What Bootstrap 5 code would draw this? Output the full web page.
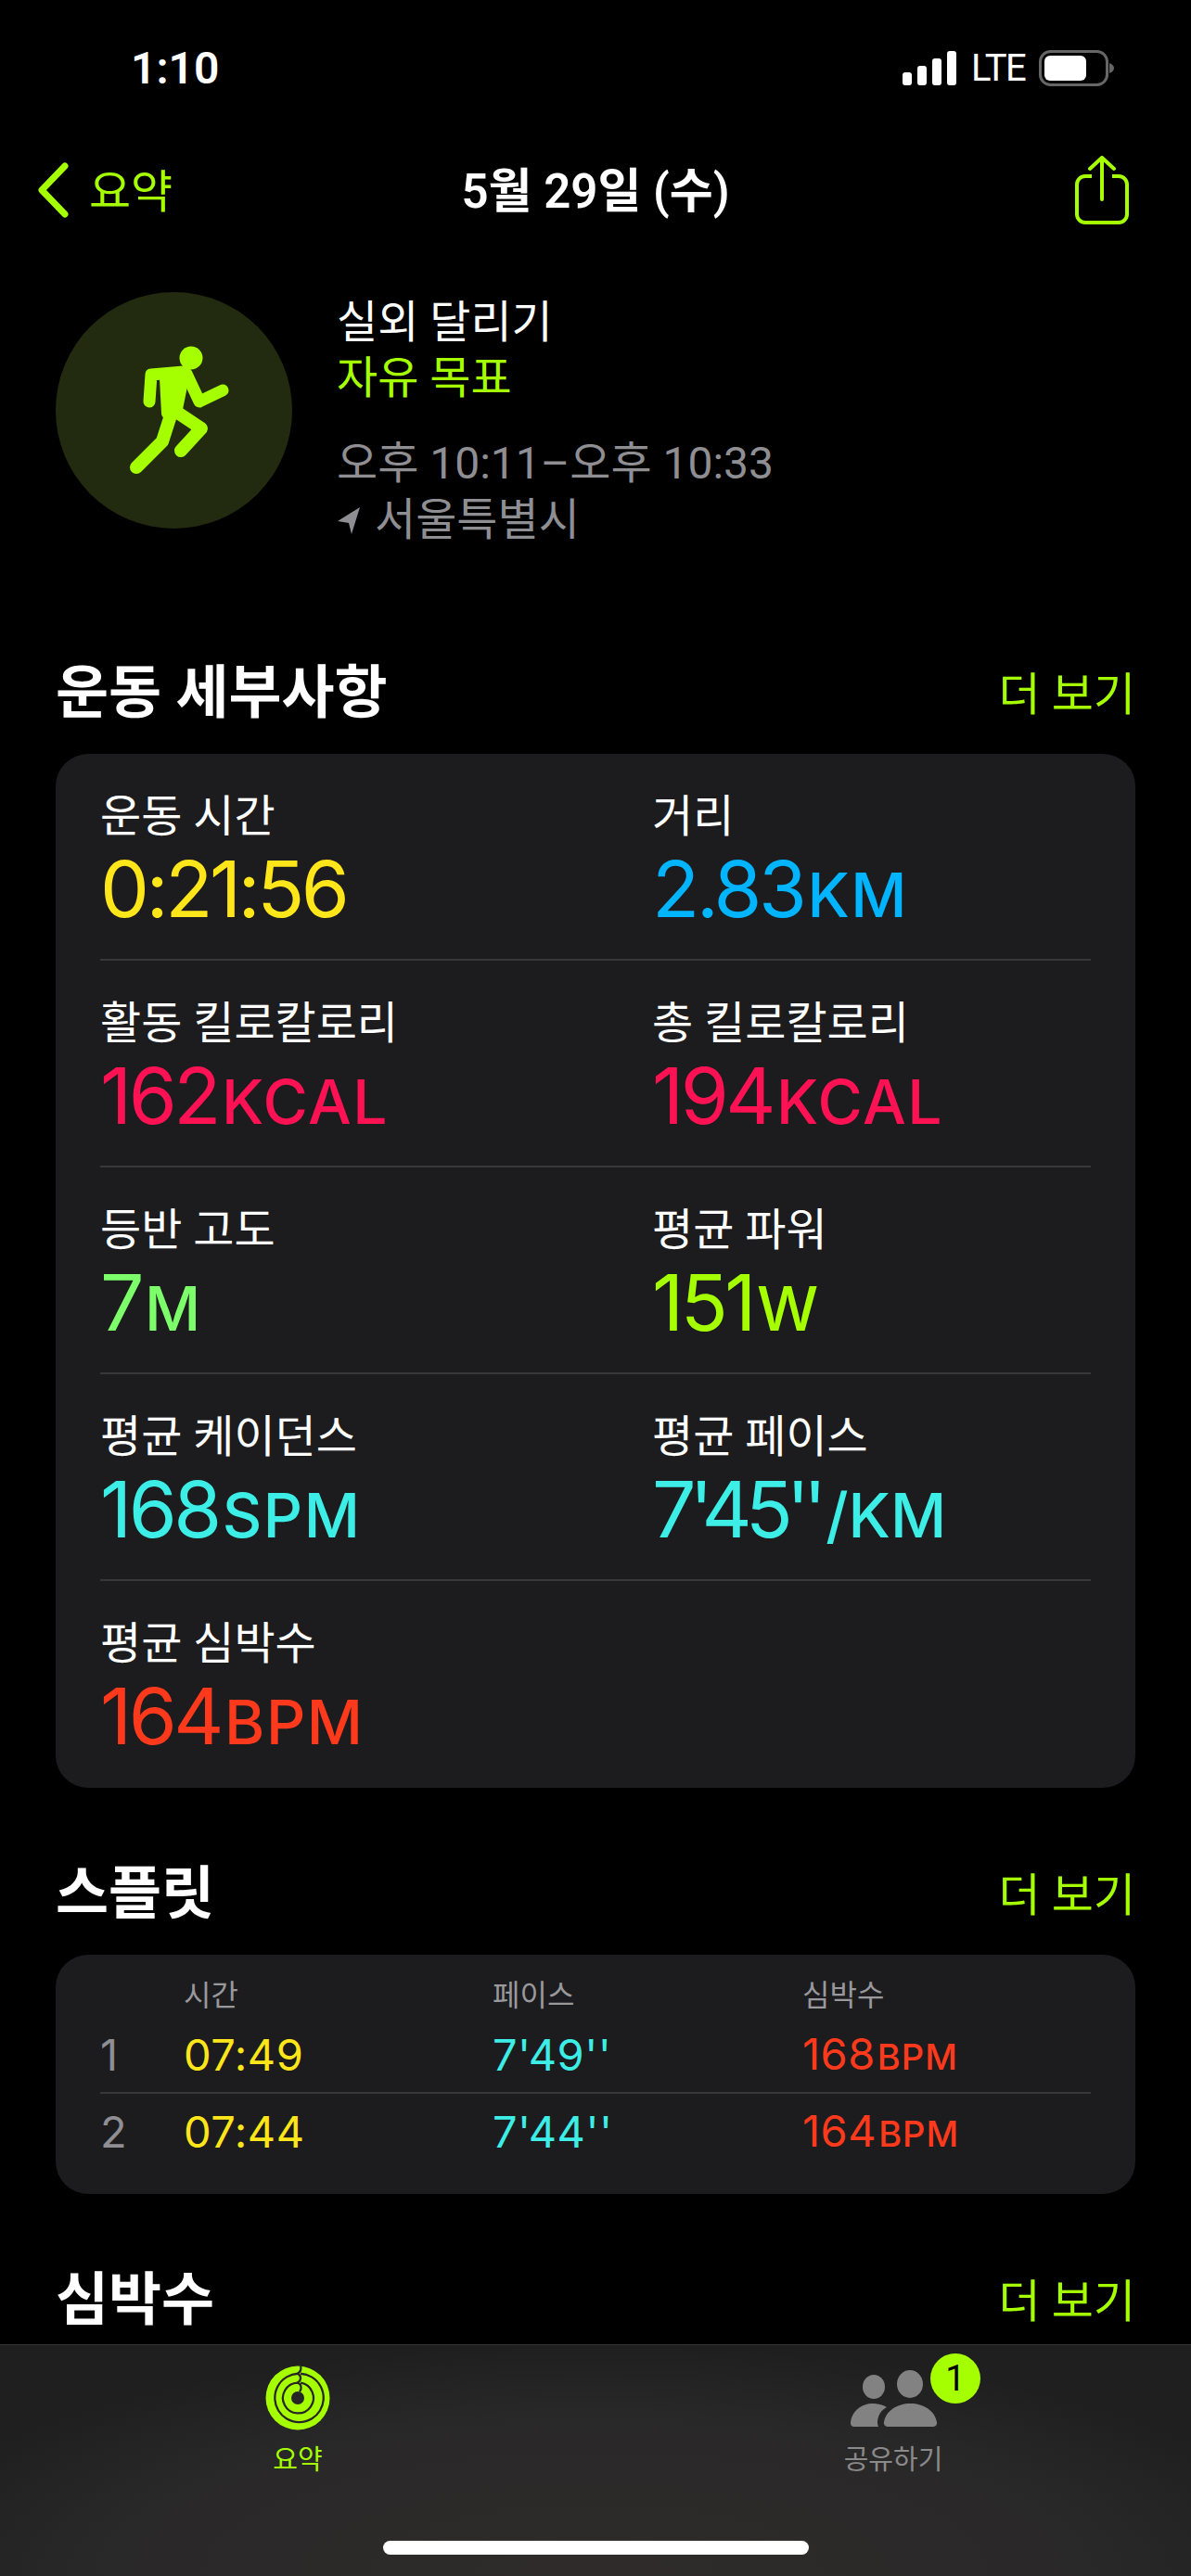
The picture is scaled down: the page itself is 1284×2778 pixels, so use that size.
<!DOCTYPE html>
<html lang="ko">
<head>
  <meta charset="UTF-8" />
  <meta name="viewport" content="width=device-width, initial-scale=1.0"/>
  <title>운동 세부사항</title>
  <link href="https://cdn.jsdelivr.net/npm/bootstrap@5.3.3/dist/css/bootstrap.min.css" rel="stylesheet" />
  <style>
    body {
      background-color: #000;
      color: #fff;
      font-family: Roboto, "Noto Sans CJK KR", sans-serif;
      height: 2778px;
      overflow: hidden;
    }
    .screen { height: 2778px; }
    .status-bar { height: 150px; padding: 46px 83px 0 141px; }
    .status-time { font-size: 48px; font-weight: 600; line-height: 56px; }
    .status-icons { gap: 16px; height: 54px; }
    .lte-text { font-size: 40px; line-height: 40px; letter-spacing: -1.500px; width: 57px; padding-top: 2px; }
    .nav-bar { height: 110px; padding: 0 67px 0 38px; }
    .nav-back { font-size: 49px; color: #a6ff00; gap: 22px; line-height: 60px; }
    .nav-back span { padding-top: 5px; }
    .nav-title { font-size: 51px; font-weight: 600; left: 0; right: 0; top: 0; line-height: 114px; }
    .content-area { padding: 55px 60px 0; overflow: hidden; }
    .run-circle { width: 255px; height: 255px; flex-shrink: 0; }
    .workout-head { gap: 48px; height: 276px; margin-bottom: 120px; }
    .workout-text { padding-top: 3px; }
    .workout-title { font-size: 48px; line-height: 60px; }
    .workout-goal { color: #a6ff00; }
    .workout-meta { font-size: 48px; line-height: 61px; color: #8e8e93; margin-top: 31px; }
    .place-row { gap: 15px; }
    .section-head { height: 68px; margin-bottom: 34px; }
    .section-title { font-size: 62px; font-weight: 700; line-height: 68px; margin: 0; padding-top: 6px; }
    .more-link { font-size: 49px; color: #a6ff00; line-height: 68px; text-decoration: none; padding-top: 10px; }
    .sheet { background: #1c1c1e; border-radius: 35px; padding: 0 48px; margin-bottom: 78px; }
    .metric-row { height: 223px; border-bottom: 2px solid #38383a; }
    .metric-row:last-child { border-bottom: 0; }
    .metric-cell { padding-top: 38px; }
    .metric-cell:first-child { flex: 0 0 595px; }
    .metric-label { font-size: 48px; line-height: 60px; }
    .metric-value { font-family: Inter, Roboto, sans-serif; font-size: 84px; line-height: 100px; letter-spacing: -3.500px; margin-top: -2px; white-space: nowrap; }
    .metric-value span { font-size: 66px; font-weight: 500; letter-spacing: 1.500px; margin-left: 4px; }
    .metric-value.pace-value { letter-spacing: -7px; }
    .metric-value.pace-value span { letter-spacing: 0; margin-left: 6px; }
    .c-yellow { color: #ffe61a; }
    .c-blue { color: #00b4ff; }
    .c-pink { color: #ff1253; }
    .c-green { color: #7dff6b; }
    .c-lime { color: #a6ff00; }
    .c-cyan { color: #3ceee6; }
    .c-red { color: #ff3a1c; }
    .split-sheet { height: 258px; }
    .split-grid { display: grid; grid-template-columns: 90px 333px 334px 1fr; }
    .split-head { font-size: 32px; color: #98989d; line-height: 40px; padding-top: 24px; height: 68px; }
    .split-row { font-family: Inter, Roboto, sans-serif; font-size: 47px; line-height: 60px; height: 82px; align-items: center; letter-spacing: .500px; }
    .split-row span span { font-size: 38px; font-weight: 500; letter-spacing: 1px; margin-left: 2px; }
    .split-first { border-bottom: 2px solid #38383a; }
    .split-num { color: #8e8e93; }
    .tab-bar {
      height: 250px;
      flex-shrink: 0;
      border-top: 1px solid #333;
      background: radial-gradient(ellipse 62% 100% at 50% 100%, #2f2b2b 0%, #292828 70%, #1f1f1f 100%) #272727;
    }
    .tab-item { top: 22px; width: 160px; }
    .tab-icon { height: 70px; }
    .tab-label { font-size: 29px; line-height: 36px; margin-top: 14px; }
    .tab-muted { color: #8a8a8a; }
    .tab-count {
      width: 54px; height: 54px; border-radius: 50%;
      background: #a6ff00; color: #000; font-size: 38px; line-height: 54px; text-align: center;
      left: 1003px; top: 9px;
    }
    .tab-one { left: 241px; }
    .tab-two { left: 883px; }
    .home-bar { width: 459px; height: 15px; border-radius: 8px; background: #fff; left: 413px; top: 211px; }
  </style>
</head>
<body>
  <div class="screen d-flex flex-column">
    <div class="status-bar d-flex justify-content-between align-items-start flex-shrink-0">
      <div class="status-time">1:10</div>
      <div class="status-icons d-flex align-items-center">
        <svg width="58" height="37" viewBox="0 0 58 37" fill="#fff">
          <rect x="0" y="23" width="10" height="14" rx="3"/>
          <rect x="16" y="16" width="10" height="21" rx="3"/>
          <rect x="32" y="8" width="10" height="29" rx="3"/>
          <rect x="48" y="0" width="10" height="37" rx="3"/>
        </svg>
        <span class="lte-text">LTE</span>
        <svg width="81" height="39" viewBox="0 0 81 39">
          <rect x="1.500" y="1.500" width="72" height="36" rx="11" fill="none" stroke="#666" stroke-width="3"/>
          <rect x="6" y="6" width="45" height="27" rx="6" fill="#fff"/>
          <path d="M76 14c3 1 5 3 5 5.500s-2 4.500-5 5.500z" fill="#666"/>
        </svg>
      </div>
    </div>

    <div class="nav-bar d-flex justify-content-between align-items-center position-relative flex-shrink-0">
      <div class="nav-back d-flex align-items-center">
        <svg width="36" height="60" viewBox="0 0 36 60"><path d="M32 4 7 30l25 26" fill="none" stroke="#a6ff00" stroke-width="7" stroke-linecap="round" stroke-linejoin="round"/></svg>
        <span>요약</span>
      </div>
      <div class="nav-title position-absolute text-center">5월 29일 (수)</div>
      <svg width="58" height="74" viewBox="0 0 58 74" class="position-relative">
        <path d="M18 22H11a9 9 0 0 0-9 9v32a9 9 0 0 0 9 9h36a9 9 0 0 0 9-9V31a9 9 0 0 0-9-9h-7" fill="none" stroke="#a6ff00" stroke-width="4"/>
        <path d="M29 47V2M16 14 29 2l13 12" fill="none" stroke="#a6ff00" stroke-width="4" stroke-linecap="round" stroke-linejoin="round"/>
      </svg>
    </div>

    <div class="content-area flex-grow-1">
      <div class="workout-head d-flex">
        <svg class="run-circle" viewBox="60 315 255 255">
          <circle cx="187.500" cy="442.500" r="127.500" fill="#222b10"/>
          <circle cx="206" cy="386" r="12.500" fill="#a6ff00"/>
          <g fill="none" stroke="#a6ff00" stroke-linecap="round" stroke-linejoin="round">
            <path d="M161 433 163 404 198 401" stroke-width="13"/>
            <path d="M201 403 215 433 240 421" stroke-width="13"/>
            <path d="M178 408 198 406 190 446 180 446z" stroke-width="12" fill="#a6ff00"/>
            <path d="M190 444 217 462 195 486" stroke-width="14"/>
            <path d="M184 448 175 476 147 504" stroke-width="14"/>
          </g>
        </svg>
        <div class="workout-text">
          <div class="workout-title">실외 달리기</div>
          <div class="workout-title workout-goal">자유 목표</div>
          <div class="workout-meta">오후 10:11–오후 10:33</div>
          <div class="workout-meta place-row d-flex align-items-center mt-0">
            <svg width="26" height="30" viewBox="0 0 26 30"><path d="M25 1 1 16l12 2 3 12z" fill="#8e8e93"/></svg>
            <span>서울특별시</span>
          </div>
        </div>
      </div>

      <div class="section-head d-flex justify-content-between align-items-center">
        <h2 class="section-title">운동 세부사항</h2>
        <a class="more-link" href="#">더 보기</a>
      </div>
      <div class="sheet">
        <div class="metric-row d-flex">
          <div class="metric-cell"><div class="metric-label">운동 시간</div><div class="metric-value c-yellow">0:21:56</div></div>
          <div class="metric-cell"><div class="metric-label">거리</div><div class="metric-value c-blue">2.83<span>KM</span></div></div>
        </div>
        <div class="metric-row d-flex">
          <div class="metric-cell"><div class="metric-label">활동 킬로칼로리</div><div class="metric-value c-pink">162<span>KCAL</span></div></div>
          <div class="metric-cell"><div class="metric-label">총 킬로칼로리</div><div class="metric-value c-pink">194<span>KCAL</span></div></div>
        </div>
        <div class="metric-row d-flex">
          <div class="metric-cell"><div class="metric-label">등반 고도</div><div class="metric-value c-green">7<span>M</span></div></div>
          <div class="metric-cell"><div class="metric-label">평균 파워</div><div class="metric-value c-lime">151<span>W</span></div></div>
        </div>
        <div class="metric-row d-flex">
          <div class="metric-cell"><div class="metric-label">평균 케이던스</div><div class="metric-value c-cyan">168<span>SPM</span></div></div>
          <div class="metric-cell"><div class="metric-label">평균 페이스</div><div class="metric-value pace-value c-cyan">7'45''<span>/KM</span></div></div>
        </div>
        <div class="metric-row d-flex">
          <div class="metric-cell"><div class="metric-label">평균 심박수</div><div class="metric-value c-red">164<span>BPM</span></div></div>
        </div>
      </div>

      <div class="section-head d-flex justify-content-between align-items-center">
        <h2 class="section-title">스플릿</h2>
        <a class="more-link" href="#">더 보기</a>
      </div>
      <div class="sheet split-sheet">
        <div class="split-grid split-head">
          <span></span><span>시간</span><span>페이스</span><span>심박수</span>
        </div>
        <div class="split-grid split-row split-first">
          <span class="split-num">1</span><span class="c-yellow">07:49</span><span class="c-cyan">7'49''</span><span class="c-red">168<span>BPM</span></span>
        </div>
        <div class="split-grid split-row">
          <span class="split-num">2</span><span class="c-yellow">07:44</span><span class="c-cyan">7'44''</span><span class="c-red">164<span>BPM</span></span>
        </div>
      </div>

      <div class="section-head d-flex justify-content-between align-items-center">
        <h2 class="section-title">심박수</h2>
        <a class="more-link" href="#">더 보기</a>
      </div>
    </div>

    <div class="tab-bar position-relative">
      <div class="tab-item tab-one position-absolute d-flex flex-column align-items-center c-lime">
        <div class="tab-icon d-flex align-items-center">
          <svg width="70" height="70" viewBox="0 0 68 68">
            <circle cx="34" cy="34" r="33.500" fill="#a6ff00"/>
            <g fill="none" stroke="#262626" stroke-width="2.200">
              <path d="M37 8.500A25.500 25.500 0 1 1 34 8.500"/>
              <path d="M37 18.200A16 16 0 1 1 34 18"/>
              <path d="M37 0.500C38 4 37.500 6 34 8.500C38 11 38 15 34 18C38 20 38.500 24 36 27.500"/>
            </g>
            <circle cx="34" cy="34" r="6.800" fill="#262626"/>
          </svg>
        </div>
        <div class="tab-label">요약</div>
      </div>
      <div class="tab-item tab-two position-absolute d-flex flex-column align-items-center">
        <div class="tab-icon d-flex align-items-center">
          <svg width="93" height="61" viewBox="0 0 93 61" fill="#828282">
            <ellipse cx="25" cy="18" rx="12" ry="13"/>
            <ellipse cx="64" cy="15" rx="14" ry="15"/>
            <path d="M4 61a4 4 0 0 1-4-4C1 44 12 36 24 36c5 0 10 1 15 4-6 3-9 8-10 15 0 2 0 4 1 6z"/>
            <path d="M40 61a4 4 0 0 1-4-5C38 44 50 36 64.500 36S91 44 93 56a4 4 0 0 1-4 5z"/>
          </svg>
        </div>
        <div class="tab-label tab-muted">공유하기</div>
      </div>
      <div class="tab-count position-absolute">1</div>
      <div class="home-bar position-absolute"></div>
    </div>
  </div>
</body>
</html>
